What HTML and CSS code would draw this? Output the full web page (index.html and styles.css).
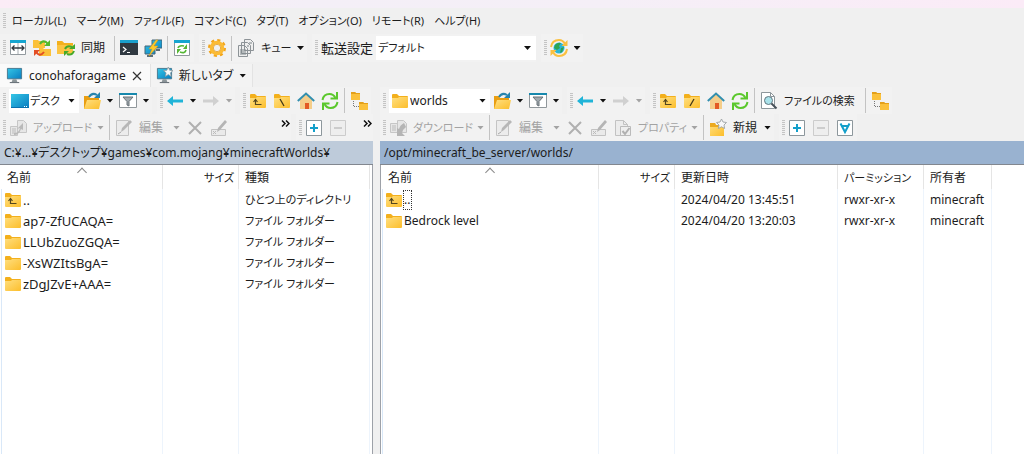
FILE: index.html
```html
<!DOCTYPE html>
<html lang="ja">
<head>
<meta charset="utf-8">
<title>conohaforagame - WinSCP</title>
<link rel="stylesheet" href="styles.css">
</head>
<body>
<svg class="symbols" aria-hidden="true">
  <defs>
    <linearGradient id="gold" x1="0" y1="0" x2="1" y2="1"><stop offset="0" stop-color="#ffdf80"/><stop offset="1" stop-color="#fcbe2c"/></linearGradient>
    <linearGradient id="screen" x1="0" y1="0" x2="1" y2="1"><stop offset="0" stop-color="#35c6e6"/><stop offset="1" stop-color="#087cc0"/></linearGradient>
  </defs>
  <symbol id="folder" viewBox="0 0 18 18"><path d="M1 3q0-1 1-1h4l2 2h8q1 0 1 1v3H1z" fill="#f3b01c"/><path d="M1 6h6l1-1h9v10q0 1-1 1H2q-1 0-1-1z" fill="url(#gold)"/></symbol>
  <symbol id="folder-up" viewBox="0 0 18 18"><use href="#folder"/><path d="M6.500 8v4.500h6M4.500 10l2-2.500 2 2.500" fill="none" stroke="#54461e" stroke-width="1.200"/></symbol>
  <symbol id="folder-back" viewBox="0 0 18 18"><use href="#folder"/><path d="M7 7l4 7" stroke="#433817" stroke-width="1.300"/></symbol>
  <symbol id="folder-slash" viewBox="0 0 18 18"><use href="#folder"/><path d="M11 7l-4 7" stroke="#433817" stroke-width="1.300"/></symbol>
  <symbol id="panels" viewBox="0 0 18 18"><path d="M1.500 2.500h15v13h-15z" fill="#fff" stroke="#92999e"/><path d="M1 1h16v3H1z" fill="#16a5d0"/><path d="M9 4v11" stroke="#a5abb0"/><path d="M3.500 9h11M5.500 6.500L3 9l2.500 2.500M12.500 6.500L15 9l-2.500 2.500" fill="none" stroke="#333a40" stroke-width="1.300"/></symbol>
  <symbol id="sync" viewBox="0 0 18 18"><path d="M0 1h5l1 1h6v7H0zM6 9h4l1 1h7v7H6z" fill="#fbc13a"/><path d="M7 5q2-4 6-2l2 2" fill="none" stroke="#54b82d" stroke-width="2"/><path d="M17 1v6h-6z" fill="#54b82d"/><path d="M11 13q-3 4-6 2l-2-2" fill="none" stroke="#e34e25" stroke-width="2"/><path d="M1 17v-6h6z" fill="#e34e25"/></symbol>
  <symbol id="folder-sync" viewBox="0 0 18 18"><path d="M0 2h5l2 2h9v11H0z" fill="#fcc440"/><path d="M0 2h5l2 2h9v2H0z" fill="#f3b01c"/><path d="M8 10q2-4 7-2M17 12q-2 5-7 3" fill="none" stroke="#44a92a" stroke-width="2"/><path d="M18 5v5h-6zM7 17v-5h5z" fill="#44a92a"/></symbol>
  <symbol id="terminal" viewBox="0 0 18 18"><path d="M0 2h18v14H0z" fill="#303941"/><path d="M0 1h18v3H0z" fill="#1a9fcc"/><path d="M3 8l3 2.500L3 13M7 13.500h3" fill="none" stroke="#fff" stroke-width="1.200"/></symbol>
  <symbol id="putty" viewBox="0 0 18 18"><path d="M8 1h10v8H8zM1 7h10v8H1z" fill="url(#screen)" stroke="#466779"/><path d="M3 17h6M12 11h4" stroke="#5d7078" stroke-width="2"/><path d="M12 1L5 10h3l-3 7 9-10h-4l4-6z" fill="#ffc92c" stroke="#d79d17" stroke-width=".5"/></symbol>
  <symbol id="window-sync" viewBox="0 0 18 18"><path d="M1.500 2.500h15v14h-15z" fill="#fff" stroke="#8f979c"/><path d="M1 1h16v3H1z" fill="#16a5d0"/><path d="M5 9q1-3 6-2M13 11q-1 4-6 2" fill="none" stroke="#55b635" stroke-width="1.600"/><path d="M14 5v5h-4zM4 15v-5h4z" fill="#55b635"/></symbol>
  <symbol id="gear" viewBox="0 0 18 18"><circle cx="9" cy="9" r="7.500" fill="none" stroke="#f2a51c" stroke-width="3" stroke-dasharray="3 2.890"/><circle cx="9" cy="9" r="5.500" fill="#f0f0f0" stroke="#fbbb35" stroke-width="3.600"/><circle cx="9" cy="9" r="3.700" fill="#f0f0f0" stroke="#e59c1c" stroke-width=".8"/></symbol>
  <symbol id="queue" viewBox="0 0 18 18"><path d="M7.500.500h6l3 3v8h-9zM4.500 3.500h6l3 3v8h-9zM1.500 6.500h6l3 3v8h-9z" fill="#eee" stroke="#8d9397"/><path d="M3 11h6M3 13h6M3 15h6M12 4h3M10 7h2" stroke="#7d8589"/></symbol>
  <symbol id="globe" viewBox="0 0 18 18"><circle cx="9" cy="9" r="5.500" fill="#2cb6d4"/><path d="M5 6q3-3 6-2l-2 3 1 2-3 2-3-2zM11 9l3-1-2 5-2 1z" fill="#2ea452"/><path d="M1 8q1-7 8-7 4 0 6 4M17 10q-1 7-8 7-4 0-6-4" fill="none" stroke="#fac040" stroke-width="2"/><path d="M17.500 1v6h-6zM.500 17v-6h6z" fill="#fac040"/></symbol>
  <symbol id="monitor" viewBox="0 0 18 18"><path d="M1.500 1.500h15v11h-15z" fill="url(#screen)" stroke="#47778e"/><path d="M7 13h4l1 3H6z" fill="#8c9599"/><path d="M4 16.500h10" stroke="#566168"/></symbol>
  <symbol id="monitor-new" viewBox="0 0 18 18"><use href="#monitor"/><path d="M13 0l1.500 3.500 3.500.300-2.700 2.400.8 3.800-3.100-2-3.100 2 .8-3.800L8 3.800l3.500-.3z" fill="#f9fbfc" stroke="#8e9a9f" stroke-width=".8"/></symbol>
  <symbol id="desktop" viewBox="0 0 18 18"><path d="M0 2h18v14H0z" fill="url(#screen)"/><path d="M0 15.500h18" stroke="#0870ae"/><path d="M13 14.500h4" stroke="#fff" stroke-dasharray="1 1"/></symbol>
  <symbol id="open" viewBox="0 0 18 18"><path d="M1 4h5l1 2h9v11H1z" fill="#e99e11"/><path d="M4 8h14l-2 9H1z" fill="url(#gold)"/><path d="M6 5q3-5 8-2" fill="none" stroke="#2584ae" stroke-width="2"/><path d="M17 0v6h-6z" fill="#2584ae"/></symbol>
  <symbol id="filter" viewBox="0 0 18 18"><path d="M.500 1.500h17v14H.500z" fill="#fff" stroke="#90979b"/><path d="M0 1h18v2H0z" fill="#1688ad"/><path d="M4 5h10l-4 4.500V14l-2-1V9.500z" fill="#a1a9ae" stroke="#687279"/></symbol>
  <symbol id="arrow-left" viewBox="0 0 18 18"><path d="M1 9l6-5v3.500h10v3H7V14z" fill="#20b4d8"/></symbol>
  <symbol id="arrow-right" viewBox="0 0 18 18"><path d="M17 9l-6-5v3.500H1v3h10V14z" fill="#d0d0d0"/></symbol>
  <symbol id="home" viewBox="0 0 18 18"><path d="M3 8l6-6 6 6v9H3z" fill="#f5ce8a"/><path d="M8 11h4v6H8z" fill="#e35b25"/><path d="M.800 9L9 1.500 17.200 9" fill="none" stroke="#338fae" stroke-width="2"/></symbol>
  <symbol id="refresh" viewBox="0 0 18 18"><path d="M1.500 8q1-6 7-6 4 0 6 4M16.500 10q-1 6-7 6-4 0-6-4" fill="none" stroke="#5bc82c" stroke-width="2"/><path d="M16 0v6.500H9.500M2 18v-6.500h6.500" fill="none" stroke="#5bc82c" stroke-width="2"/></symbol>
  <symbol id="tree" viewBox="0 0 18 18"><path d="M1 0h4l1 1h4v7H1zM9 10h4l1 1h4v7H9z" fill="#fbc13b"/><path d="M1 0h4l1 1h4v1H1zM9 10h4l1 1h4v1H9z" fill="#e4a01a"/><path d="M3.500 9v5.500H9" fill="none" stroke="#777" stroke-dasharray="1 1"/></symbol>
  <symbol id="find" viewBox="0 0 18 18"><path d="M1.500.500h9l4 4v12h-13z" fill="#fff" stroke="#8d969b"/><path d="M10.500.500v4h4" fill="none" stroke="#8d969b"/><circle cx="8.500" cy="8.500" r="4" fill="#a9e2ea" stroke="#61767f"/><path d="M11.500 11.500l5 5" stroke="#465159" stroke-width="2"/></symbol>
  <symbol id="upload" viewBox="0 0 18 18"><path d="M8.500 1.500h6l3 3v9h-9zM1.500 7.500h7v9h-7z" fill="#e6e6e6" stroke="#c6c6c6"/><path d="M3 10h4M3 12h4M3 14h4" stroke="#bbb"/><path d="M5 14q5 0 6-5l-3 1 6-6v7l-2-1q-2 6-7 6z" fill="#b9b9b9"/></symbol>
  <symbol id="download" viewBox="0 0 18 18"><path d="M8.500 1.500h6l3 3v9h-9zM1.500 4.500h7v9h-7z" fill="#e6e6e6" stroke="#c6c6c6"/><path d="M3 7h4M3 9h4M3 11h4" stroke="#bbb"/><path d="M15 4q-4 2-5 6L8 9v8h8l-3-3q1-4 4-6z" fill="#b5b5b5"/></symbol>
  <symbol id="edit" viewBox="0 0 18 18"><path d="M1.500 1.500h12v15h-12z" fill="#ececec" stroke="#c4c4c4"/><path d="M6 13l1-4 8-8 2 2-8 8z" fill="#b7b7b7"/><path d="M3 15l3-2" stroke="#aaa"/></symbol>
  <symbol id="delete" viewBox="0 0 18 18"><path d="M3 3l12 12M15 3L3 15" stroke="#b0b0b0" stroke-width="2"/></symbol>
  <symbol id="rename" viewBox="0 0 18 18"><path d="M1.500 10.500h14v6h-14z" fill="#eaeaea" stroke="#c2c2c2"/><path d="M7 13l1-4 7-8 2 2-7 8z" fill="#b5b5b5"/><path d="M3 12l3 3M6 12l-3 3" stroke="#bbb"/></symbol>
  <symbol id="props" viewBox="0 0 18 18"><path d="M1.500 1.500h8l4 4v11h-12z" fill="#ececec" stroke="#c2c2c2"/><path d="M9.500 1.500v4h4" fill="none" stroke="#c2c2c2"/><path d="M6.500 7.500h10v9h-10z" fill="#eee" stroke="#bbb"/><path d="M8.500 12l2.500 3L15.500 9" fill="none" stroke="#b0b0b0" stroke-width="2"/></symbol>
  <symbol id="new-folder" viewBox="0 0 18 18"><path d="M1 4h5l1 2h8v11H1z" fill="url(#gold)"/><path d="M1 4h5l1 2h8v2H1z" fill="#ecaa20"/><path d="M12.500 0L14 3l3.500.500L15 6l.600 3.500-3.100-1.700-3.100 1.700L10 6 7.500 3.500 11 3z" fill="#f7f7f7" stroke="#9ca1a3" stroke-width=".9"/></symbol>
  <symbol id="plus" viewBox="0 0 18 18"><path d="M1.500 1.500h15v15h-15z" fill="#fff" stroke="#8d979c"/><path d="M9 5v8M5 9h8" stroke="#139fca" stroke-width="2"/></symbol>
  <symbol id="minus" viewBox="0 0 18 18"><path d="M1.500 1.500h15v15h-15z" fill="#eee" stroke="#ccc"/><path d="M5 9h8" stroke="#ccc" stroke-width="2"/></symbol>
  <symbol id="select-files" viewBox="0 0 18 18"><path d="M1.500 1.500h15v15h-15z" fill="#fff" stroke="#8d979c"/><path d="M4.500 4.500L9 13l4.500-8.500M6 7h6" fill="none" stroke="#139fca" stroke-width="2"/></symbol>
  <symbol id="more" viewBox="0 0 9 7"><path d="M1 .500l3 3-3 3M5 .500l3 3-3 3" fill="none" stroke="#111" stroke-width="1.500"/></symbol>
</svg>

<div class="titlebar"></div>
<nav class="menubar kana">
  <span class="grip"></span>
  <button>ローカル(L)</button><button>マーク(M)</button><button>ファイル(F)</button><button>コマンド(C)</button><button>タブ(T)</button><button>オプション(O)</button><button>リモート(R)</button><button>ヘルプ(H)</button>
</nav>

<div class="toolbar main-toolbar">
  <div class="group"><span class="grip"></span>
    <button class="tool" aria-label="パネル"><svg><use href="#panels"/></svg></button>
    <button class="tool" aria-label="ディレクトリの同期"><svg><use href="#sync"/></svg></button>
    <button class="tool with-text sync-tool"><svg><use href="#folder-sync"/></svg><span>同期</span></button>
    <span class="sep"></span>
    <button class="tool" aria-label="ターミナル"><svg><use href="#terminal"/></svg></button>
    <button class="tool" aria-label="PuTTY"><svg><use href="#putty"/></svg></button>
    <span class="sep"></span>
    <button class="tool" aria-label="更新"><svg><use href="#window-sync"/></svg></button>
  </div>
  <div class="group"><span class="grip"></span>
    <button class="tool" aria-label="環境設定"><svg><use href="#gear"/></svg></button>
    <span class="sep"></span>
    <button class="tool with-text queue-tool kana"><svg><use href="#queue"/></svg><span>キュー</span><i class="caret"></i></button>
  </div>
  <div class="group"><span class="grip"></span>
    <label class="setting" for="transfer">転送設定</label>
    <span class="combo transfer kana"><select id="transfer"><option>デフォルト</option></select><i class="caret"></i></span>
  </div>
  <div class="group"><span class="grip"></span>
    <button class="tool" aria-label="ブラウズの同期"><svg><use href="#globe"/></svg></button>
    <button class="drop" aria-label="オプション"><i class="caret"></i></button>
  </div>
</div>

<div class="tabs">
  <button class="tab active"><svg><use href="#monitor"/></svg><span>conohaforagame</span><svg class="close" viewBox="0 0 10 10"><path d="M1 1l8 8M9 1L1 9" stroke="#333" stroke-width="1.200"/></svg></button>
  <button class="tab"><svg><use href="#monitor-new"/></svg><span>新しいタブ</span><i class="caret"></i></button>
</div>

<main class="panels">
  <section class="panel local">
    <div class="toolbar">
      <div class="group"><span class="grip"></span>
        <label class="combo drive kana"><svg><use href="#desktop"/></svg><select aria-label="ドライブ"><option>デスク</option></select><i class="caret"></i></label>
        <button class="tool" aria-label="開く"><svg><use href="#open"/></svg></button><button class="drop" aria-label="履歴"><i class="caret"></i></button>
        <button class="tool" aria-label="フィルタ"><svg><use href="#filter"/></svg></button><button class="drop" aria-label="フィルタ一覧"><i class="caret"></i></button>
      </div>
      <div class="group"><span class="grip"></span>
        <button class="tool" aria-label="戻る"><svg><use href="#arrow-left"/></svg></button><button class="drop" aria-label="戻る一覧"><i class="caret"></i></button>
        <button class="tool" aria-label="進む" disabled><svg><use href="#arrow-right"/></svg></button><button class="drop" aria-label="進む一覧" disabled><i class="caret"></i></button>
      </div>
      <div class="group"><span class="grip"></span>
        <button class="tool" aria-label="上へ"><svg><use href="#folder-up"/></svg></button>
        <button class="tool" aria-label="ルート"><svg><use href="#folder-back"/></svg></button>
        <button class="tool" aria-label="ホーム"><svg><use href="#home"/></svg></button>
        <button class="tool" aria-label="更新"><svg><use href="#refresh"/></svg></button>
        <span class="sep"></span>
        <button class="tool" aria-label="ツリー"><svg><use href="#tree"/></svg></button>
      </div>
    </div>
    <div class="toolbar">
      <div class="group grow"><span class="grip"></span>
        <button class="tool with-text transfer-tool kana" disabled><svg><use href="#upload"/></svg><span>アップロード</span><i class="caret"></i></button>
        <span class="sep"></span>
        <button class="tool with-text edit-tool" disabled><svg><use href="#edit"/></svg><span>編集</span><i class="caret"></i></button>
        <button class="tool" aria-label="削除" disabled><svg><use href="#delete"/></svg></button>
        <button class="tool" aria-label="名前の変更" disabled><svg><use href="#rename"/></svg></button>
        <button class="more" aria-label="その他"><svg><use href="#more"/></svg></button>
      </div>
      <div class="group selection"><span class="grip"></span>
        <button class="tool" aria-label="選択"><svg><use href="#plus"/></svg></button>
        <button class="tool" aria-label="選択解除" disabled><svg><use href="#minus"/></svg></button>
        <button class="more" aria-label="その他"><svg><use href="#more"/></svg></button>
      </div>
    </div>
    <div class="path">C:¥...¥デスクトップ¥games¥com.mojang¥minecraftWorlds¥</div>
    <div class="list">
      <table>
        <colgroup><col class="c-name"><col class="c-size"><col class="c-type"><col></colgroup>
        <thead><tr><th class="sorted">名前</th><th class="size kana">サイズ</th><th>種類</th><th></th></tr></thead>
        <tbody>
          <tr><td><span class="file"><svg><use href="#folder-up"/></svg><span>..</span></span></td><td></td><td class="kana">ひとつ上のディレクトリ</td><td></td></tr>
          <tr><td><span class="file"><svg><use href="#folder"/></svg><span>ap7-ZfUCAQA=</span></span></td><td></td><td class="kana">ファイル フォルダー</td><td></td></tr>
          <tr><td><span class="file"><svg><use href="#folder"/></svg><span>LLUbZuoZGQA=</span></span></td><td></td><td class="kana">ファイル フォルダー</td><td></td></tr>
          <tr><td><span class="file"><svg><use href="#folder"/></svg><span>-XsWZItsBgA=</span></span></td><td></td><td class="kana">ファイル フォルダー</td><td></td></tr>
          <tr><td><span class="file"><svg><use href="#folder"/></svg><span>zDgJZvE+AAA=</span></span></td><td></td><td class="kana">ファイル フォルダー</td><td></td></tr>
          <tr class="rest"><td></td><td></td><td></td><td></td></tr>
        </tbody>
      </table>
    </div>
  </section>

  <section class="panel remote">
    <div class="toolbar">
      <div class="group"><span class="grip"></span>
        <label class="combo folder-combo"><svg><use href="#folder"/></svg><select aria-label="ディレクトリ"><option>worlds</option></select><i class="caret"></i></label>
        <button class="tool" aria-label="開く"><svg><use href="#open"/></svg></button><button class="drop" aria-label="履歴"><i class="caret"></i></button>
        <button class="tool" aria-label="フィルタ"><svg><use href="#filter"/></svg></button><button class="drop" aria-label="フィルタ一覧"><i class="caret"></i></button>
      </div>
      <div class="group"><span class="grip"></span>
        <button class="tool" aria-label="戻る"><svg><use href="#arrow-left"/></svg></button><button class="drop" aria-label="戻る一覧"><i class="caret"></i></button>
        <button class="tool" aria-label="進む" disabled><svg><use href="#arrow-right"/></svg></button><button class="drop" aria-label="進む一覧" disabled><i class="caret"></i></button>
      </div>
      <div class="group"><span class="grip"></span>
        <button class="tool" aria-label="上へ"><svg><use href="#folder-up"/></svg></button>
        <button class="tool" aria-label="ルート"><svg><use href="#folder-slash"/></svg></button>
        <button class="tool" aria-label="ホーム"><svg><use href="#home"/></svg></button>
        <button class="tool" aria-label="更新"><svg><use href="#refresh"/></svg></button>
        <span class="sep"></span>
        <button class="tool with-text find-tool kana"><svg><use href="#find"/></svg><span>ファイルの検索</span></button>
        <span class="sep"></span>
        <button class="tool" aria-label="ツリー"><svg><use href="#tree"/></svg></button>
      </div>
    </div>
    <div class="toolbar">
      <div class="group"><span class="grip"></span>
        <button class="tool with-text transfer-tool kana" disabled><svg><use href="#download"/></svg><span>ダウンロード</span><i class="caret"></i></button>
        <span class="sep"></span>
        <button class="tool with-text edit-tool" disabled><svg><use href="#edit"/></svg><span>編集</span><i class="caret"></i></button>
        <button class="tool" aria-label="削除" disabled><svg><use href="#delete"/></svg></button>
        <button class="tool" aria-label="名前の変更" disabled><svg><use href="#rename"/></svg></button>
        <button class="tool with-text props-tool kana" disabled><svg><use href="#props"/></svg><span>プロパティ</span><i class="caret"></i></button>
        <span class="sep"></span>
        <button class="tool with-text new-tool"><svg><use href="#new-folder"/></svg><span>新規</span><i class="caret"></i></button>
      </div>
      <div class="group"><span class="grip"></span>
        <button class="tool" aria-label="選択"><svg><use href="#plus"/></svg></button>
        <button class="tool" aria-label="選択解除" disabled><svg><use href="#minus"/></svg></button>
        <button class="tool" aria-label="すべて選択"><svg><use href="#select-files"/></svg></button>
      </div>
    </div>
    <div class="path">/opt/minecraft_be_server/worlds/</div>
    <div class="list">
      <table>
        <colgroup><col class="r-name"><col class="c-size"><col class="c-date"><col class="c-perm"><col class="c-owner"><col></colgroup>
        <thead><tr><th class="sorted">名前</th><th class="size kana">サイズ</th><th>更新日時</th><th class="kana">パーミッション</th><th>所有者</th><th></th></tr></thead>
        <tbody>
          <tr><td><span class="file"><svg><use href="#folder-up"/></svg><span class="focused">..</span></span></td><td></td><td>2024/04/20 13:45:51</td><td>rwxr-xr-x</td><td>minecraft</td><td></td></tr>
          <tr><td><span class="file"><svg><use href="#folder"/></svg><span>Bedrock level</span></span></td><td></td><td>2024/04/20 13:20:03</td><td>rwxr-xr-x</td><td>minecraft</td><td></td></tr>
          <tr class="rest"><td></td><td></td><td></td><td></td><td></td><td></td></tr>
        </tbody>
      </table>
    </div>
  </section>
</main>
</body>
</html>
```

FILE: styles.css
```css
* { box-sizing: border-box; }

body {
  margin: 0;
  height: 100vh;
  display: flex;
  flex-direction: column;
  overflow: hidden;
  background: #f0f0f0;
  color: #1c1c1c;
  font: 12px/20px "Noto Sans", "Noto Sans CJK JP", sans-serif;
  font-feature-settings: "palt";
}

button, select {
  font: inherit;
  font-feature-settings: inherit;
  color: inherit;
  background: none;
  border: 0;
  padding: 0;
  margin: 0;
  white-space: nowrap;
}

button:disabled { color: #a3a3a3; }

.kana { font-size: 11px; }

.symbols { position: absolute; width: 0; height: 0; }

.titlebar {
  flex: none;
  height: 8px;
  background: linear-gradient(90deg, #fbecf6, #f4eff7 30%, #f5eff7 60%, #fbebf7);
}

.grip {
  flex: none;
  width: 3px;
  height: 16px;
  margin: 0 0 0 3px;
  background: repeating-linear-gradient(#c4c4c4 0 1px, #f0f0f0 1px 2px);
}

.menubar {
  flex: none;
  display: flex;
  align-items: center;
  gap: 10px;
  height: 26px;
}

.menubar .grip { margin-right: -4px; }

.toolbar { flex: none; display: flex; gap: 5px; height: 27px; }
.main-toolbar { height: 28px; }
.group { display: flex; align-items: center; background: #f2f2f2; }
.grow { flex: 1; }

.tool {
  flex: none;
  width: 24px;
  height: 24px;
  display: flex;
  align-items: center;
  padding-left: 3px;
}

.tool svg, .tab svg, .combo svg, .file svg { flex: none; width: 18px; height: 18px; }
.with-text span { flex: 1; text-align: left; padding-left: 6px; }
.with-text .caret { margin-right: 3px; }

.sync-tool { width: 58px; }
.queue-tool { width: 73px; }
.transfer-tool { width: 101px; }
.edit-tool { width: 71px; }
.props-tool { width: 90px; }
.new-tool { width: 68px; }
.find-tool { width: 106px; }

.drop {
  width: 12px;
  height: 24px;
  display: flex;
  align-items: center;
  justify-content: center;
}

.caret {
  flex: none;
  width: 7px;
  height: 4px;
  background: #111;
  clip-path: polygon(0 0, 100% 0, 50% 100%);
}

button:disabled .caret { background: #a3a3a3; }

.sep { flex: none; width: 1px; height: 25px; margin: 0 2px; background: #c3c3c3; }

.setting { width: 58px; padding-left: 3px; font-size: 13px; }

.combo {
  display: flex;
  align-items: center;
  height: 24px;
  margin-left: 3px;
  padding: 0 4px 0 2px;
  background: #fff;
}

.combo select { appearance: none; flex: 1; min-width: 0; height: 24px; outline: 0; }
.combo .caret { pointer-events: none; }
.transfer { width: 160px; margin: 0; padding-right: 5px; }
.drive { width: 70px; margin-right: 1px; }
.drive select { padding-left: 1px; }
.folder-combo { width: 101px; }
.folder-combo select { padding-left: 1px; }

.tabs { flex: none; display: flex; height: 25px; padding-top: 2px; }

.tab {
  display: flex;
  align-items: center;
  gap: 6px;
  padding: 0 6px 0 5px;
  border-right: 1px solid #e3e3e3;
  background: #f3f3f3;
}

.tab.active { background: #fafafa; padding: 0 8px 0 6px; }
.tab svg { width: 17px; height: 17px; }
.tab .close { width: 10px; height: 10px; }

.panels { flex: 1; min-height: 0; display: grid; grid-template-columns: 373fr 644fr; gap: 7px; }
.panel { min-width: 0; display: flex; flex-direction: column; }

.more { align-self: flex-start; width: 12px; height: 18px; }
.more svg { display: block; width: 9px; height: 7px; margin: auto; }
.grow .more { margin-left: auto; }
.selection { width: 77px; }
.selection .more { margin-left: auto; }

.path {
  flex: none;
  height: 24px;
  padding: 0 4px;
  line-height: 24px;
  background: #becbda;
  border-bottom: 1px solid #82878f;
  white-space: nowrap;
}

.remote .path { background: #99b2d0; }

.list { flex: 1; min-height: 0; background: #fff; border: solid #9da1a8; border-width: 0 1px; padding-left: 1px; }
.local .list { border-left: 0; }
.remote .list { border-right: 0; }

table { width: 100%; height: 100%; table-layout: fixed; border-collapse: separate; border-spacing: 0; }
.c-name { width: 162px; }
.r-name { width: 217px; }
.c-size { width: 76px; }
.c-type { width: 131px; }
.c-date { width: 163px; }
.c-perm { width: 86px; }
.c-owner { width: 68px; }

th, td {
  height: 21px;
  padding: 0 0 0 6px;
  border-right: 1px solid #edf4fc;
  text-align: left;
  font-weight: 400;
  white-space: nowrap;
}

th { height: 24px; padding-top: 2px; border-right-color: #e5e5e5; }
td:first-child { padding-left: 2px; border-left: 1px solid #d9e8f8; }
th:last-child, td:last-child { border-right: 0; padding: 0; }
th.size { text-align: right; padding-right: 4px; }
.rest td { height: auto; }

.sorted { position: relative; }

.sorted::after {
  content: "";
  position: absolute;
  top: 4px;
  left: 50%;
  width: 6px;
  height: 6px;
  border: solid #888;
  border-width: 1px 0 0 1px;
  transform: translateX(-50%) rotate(45deg);
}

.file { display: flex; align-items: center; gap: 1px; }
.local .file { font-size: 13px; }
.focused { outline: 1px dotted #333; line-height: 18px; padding-right: 1px; }
```
